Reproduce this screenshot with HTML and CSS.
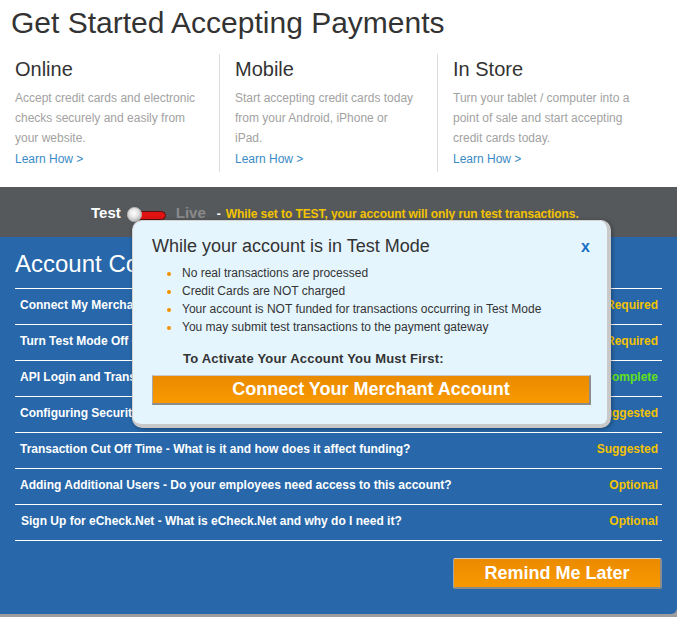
FILE: index.html
```html
<!DOCTYPE html>
<html lang="en">
<head>
<meta charset="utf-8">
<title>Get Started Accepting Payments</title>
<link rel="stylesheet" href="styles.css">
</head>
<body>
<div class="page">
  <header class="hero">
    <h1 class="hero-title">Get Started Accepting Payments</h1>
    <div class="channels">
      <div class="channel">
        <h2 class="channel-name">Online</h2>
        <p class="channel-desc">Accept credit cards and electronic checks securely and easily from your website.</p>
        <a class="channel-link" href="#">Learn How &gt;</a>
      </div>
      <div class="channel">
        <h2 class="channel-name">Mobile</h2>
        <p class="channel-desc">Start accepting credit cards today from your Android, iPhone or iPad.</p>
        <a class="channel-link" href="#">Learn How &gt;</a>
      </div>
      <div class="channel">
        <h2 class="channel-name">In Store</h2>
        <p class="channel-desc">Turn your tablet / computer into a point of sale and start accepting credit cards today.</p>
        <a class="channel-link" href="#">Learn How &gt;</a>
      </div>
    </div>
  </header>

  <div class="modebar">
    <span class="mode-test">Test</span>
    <span class="toggle"><span class="toggle-track"></span><span class="toggle-knob"></span></span>
    <span class="mode-live">Live</span>
    <span class="mode-dash">-</span>
    <span class="mode-note">While set to TEST, your account will only run test transactions.</span>
  </div>

  <section class="checklist">
    <h2 class="checklist-title">Account Configuration Checklist</h2>
    <ul class="tasks">
      <li class="task"><span class="task-name">Connect My Merchant Account</span><span class="task-status status-warn">Required</span></li>
      <li class="task"><span class="task-name">Turn Test Mode Off - Go live</span><span class="task-status status-warn">Required</span></li>
      <li class="task"><span class="task-name">API Login and Transaction Key</span><span class="task-status status-ok">Complete</span></li>
      <li class="task"><span class="task-name">Configuring Security Settings</span><span class="task-status status-warn">Suggested</span></li>
      <li class="task"><span class="task-name">Transaction Cut Off Time - What is it and how does it affect funding?</span><span class="task-status status-warn">Suggested</span></li>
      <li class="task"><span class="task-name">Adding Additional Users - Do your employees need access to this account?</span><span class="task-status status-warn">Optional</span></li>
      <li class="task"><span class="task-name task-name-indent">Sign Up for eCheck.Net - What is eCheck.Net and why do I need it?</span><span class="task-status status-warn">Optional</span></li>
    </ul>
    <div class="actions">
      <button class="btn btn-remind" type="button">Remind Me Later</button>
    </div>
  </section>

  <div class="popup">
    <div class="popup-head">
      <h3 class="popup-title">While your account is in Test Mode</h3>
      <a class="popup-close" href="#">x</a>
    </div>
    <ul class="popup-list">
      <li>No real transactions are processed</li>
      <li>Credit Cards are NOT charged</li>
      <li>Your account is NOT funded for transactions occurring in Test Mode</li>
      <li>You may submit test transactions to the payment gateway</li>
    </ul>
    <p class="popup-cta">To Activate Your Account You Must First:</p>
    <button class="btn btn-connect" type="button">Connect Your Merchant Account</button>
  </div>
</div>
</body>
</html>
```

FILE: styles.css
```css
* { box-sizing: border-box; }

html, body {
  margin: 0;
  padding: 0;
}

body {
  background: #9d9d9d;
  font-family: "Liberation Sans", Arial, sans-serif;
  color: #333;
}

.page {
  position: relative;
  width: 677px;
}

/* ---------- hero ---------- */
.hero {
  background: #fff;
  padding: 5px 0 15px 0;
}

.hero-title {
  margin: 0;
  padding-left: 11px;
  font-size: 30px;
  line-height: 36px;
  font-weight: normal;
  color: #333;
}

.channels {
  display: flex;
  margin-top: 13px;
  padding-left: 15px;
}

.channel {
  width: 204px;
  padding-top: 3px;
  padding-bottom: 3px;
}

.channel + .channel {
  border-left: 1px solid #dcdcdc;
  padding-left: 15px;
  width: 218px;
}

.channel:last-child {
  flex: 1;
}

.channel-name {
  margin: 0;
  font-size: 20px;
  line-height: 24px;
  font-weight: normal;
  color: #333;
}

.channel-desc {
  margin: 7px 0 0 0;
  max-width: 183px;
  font-size: 12px;
  line-height: 20px;
  color: #a2a2a2;
}

.channel-link {
  display: block;
  margin-top: 1px;
  font-size: 12px;
  line-height: 20px;
  color: #3b8ac5;
  text-decoration: none;
}

/* ---------- test / live bar ---------- */
.modebar {
  display: flex;
  align-items: baseline;
  height: 50px;
  padding: 16px 0 0 91px;
  background: #55595c;
  font-weight: bold;
}

.mode-test {
  font-size: 15px;
  line-height: 20px;
  color: #fff;
}

.toggle {
  position: relative;
  align-self: flex-start;
  width: 39px;
  height: 15px;
  margin: 4px 0 0 6px;
}

.toggle-track {
  position: absolute;
  left: 9px;
  top: 4px;
  width: 30px;
  height: 9px;
  border-radius: 5px;
  background: #e01212;
  border: 1px solid #5a1010;
}

.toggle-knob {
  position: absolute;
  left: 0;
  top: 0;
  width: 15px;
  height: 15px;
  border-radius: 50%;
  background: radial-gradient(circle at 45% 40%, #ffffff 0%, #e6e6e6 40%, #b4b4b4 80%, #979797 100%);
  border: 1px solid #c4c4c4;
}

.mode-live {
  margin-left: 10px;
  font-size: 15px;
  line-height: 20px;
  color: #8a8a8a;
}

.mode-dash {
  margin-left: 11px;
  font-size: 12px;
  color: #fff;
}

.mode-note {
  margin-left: 5px;
  font-size: 12px;
  color: #f4c300;
  letter-spacing: -0.08px;
}

/* ---------- checklist ---------- */
.checklist {
  background: #2767aa;
  padding: 13px 15px 25px 15px;
  border-bottom-right-radius: 6px;
}

.checklist-title {
  margin: 0 0 10px 0;
  font-size: 24px;
  line-height: 28px;
  font-weight: normal;
  color: #fff;
  white-space: nowrap;
}

.tasks {
  list-style: none;
  margin: 0;
  padding: 0;
  border-top: 1px solid #fff;
}

.task {
  display: flex;
  justify-content: space-between;
  height: 36px;
  padding: 8px 4px 0 5px;
  border-bottom: 1px solid #fff;
  font-size: 12px;
  line-height: 16px;
  font-weight: bold;
}

.task-name {
  color: #fff;
}

.task-name-indent {
  padding-left: 1px;
}

.status-warn { color: #f4c300; }
.status-ok { color: #62e01c; }

.actions {
  display: flex;
  justify-content: flex-end;
  margin-top: 17px;
}

/* ---------- buttons ---------- */
.btn {
  display: block;
  font-family: "Liberation Sans", Arial, sans-serif;
  font-weight: bold;
  font-size: 18px;
  color: #fff;
  background: linear-gradient(#ea8a00, #f99a00);
  border: 1px solid #a8a8a8;
  border-right: 2px solid #8c8c8c;
  border-bottom: 2px solid #8c8c8c;
  border-top-color: #c9c9c9;
  padding: 0;
  cursor: pointer;
}

.btn-remind {
  width: 209px;
  height: 31px;
  line-height: 28px;
  border-radius: 2px;
}

/* ---------- popup ---------- */
.popup {
  position: absolute;
  left: 132px;
  top: 220px;
  width: 479px;
  padding: 14px 20px 19px 19px;
  background: #e5f5fe;
  border-radius: 10px;
  border: 1px solid #d4d4d4;
  border-right: 4px solid #c8c8c8;
  border-bottom: 4px solid #c8c8c8;
  box-shadow: 1px 1px 4px rgba(0, 0, 0, 0.35);
}

.popup-head {
  display: flex;
  justify-content: space-between;
  align-items: baseline;
}

.popup-title {
  margin: 0;
  font-size: 18px;
  line-height: 22px;
  font-weight: normal;
  color: #333;
}

.popup-close {
  font-size: 16px;
  font-weight: bold;
  color: #1a6fc6;
  text-decoration: none;
  margin-right: -3px;
}

.popup-list {
  list-style: none;
  margin: 7px 0 0 0;
  padding: 0 0 0 30px;
}

.popup-list li {
  position: relative;
  font-size: 12px;
  line-height: 18px;
  color: #333;
}

.popup-list li::before {
  content: "";
  position: absolute;
  left: -15px;
  top: 8px;
  width: 4px;
  height: 4px;
  border-radius: 50%;
  background: #f29100;
}

.popup-cta {
  margin: 14px 0 0 31px;
  font-size: 13px;
  line-height: 18px;
  font-weight: bold;
  color: #333;
  letter-spacing: 0.2px;
}

.btn-connect {
  width: 439px;
  height: 30px;
  margin-top: 7px;
  line-height: 27px;
}
```
